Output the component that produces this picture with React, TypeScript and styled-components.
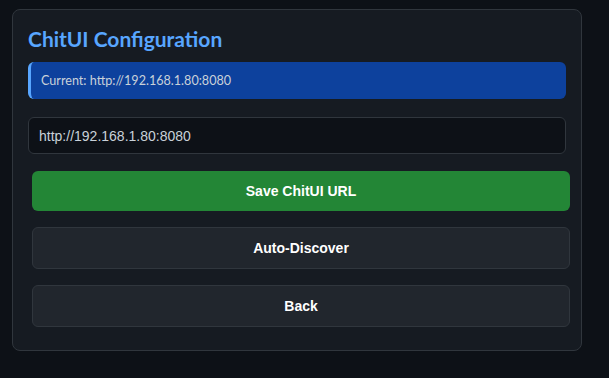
import React, { useState } from 'react'
import styled, { createGlobalStyle } from 'styled-components'

const GlobalStyle = createGlobalStyle`
  html, body {
    margin: 0;
    padding: 0;
    background: #0d1117;
    font-family: Lato, 'Noto Sans', sans-serif;
  }
`

const Page = styled.div`
  padding: 9px 27px 0 12px;
  width: 609px;
  height: 378px;
  box-sizing: border-box;
`

const Card = styled.div`
  background: #161b22;
  border: 1px solid #30363d;
  border-radius: 8px;
  padding: 16px 15px 16px 15px;
  display: flex;
  flex-direction: column;
  width: 570px;
  box-sizing: border-box;
`

const Title = styled.h2`
  margin: 0 0 10px 0;
  color: #58a6ff;
  font-size: 21px;
  line-height: 26px;
  font-weight: 700;
`

const Info = styled.div`
  background: #0d419d;
  border-left: 3px solid #58a6ff;
  border-radius: 6px;
  padding: 10px 10px;
  color: #c9d1d9;
  font-size: 12.6px;
  line-height: 17px;
  margin-bottom: 18px;
`

const UrlInput = styled.input`
  background: #0d1117;
  border: 1px solid #30363d;
  border-radius: 6px;
  color: #c9d1d9;
  font-family: 'Liberation Sans', Arial, sans-serif;
  font-size: 14px;
  padding: 10px 10px;
  height: 37px;
  box-sizing: border-box;
  outline: none;
  margin-bottom: 17px;
`

const Button = styled.button<{ $primary?: boolean }>`
  width: 100%;
  margin: 0 0 16px 4px;
  height: ${(p) => (p.$primary ? '40px' : '42px')};
  border: ${(p) => (p.$primary ? 'none' : '1px solid #30363d')};
  background: ${(p) => (p.$primary ? '#238636' : '#21262d')};
  color: #fff;
  border-radius: 6px;
  font-family: 'Liberation Sans', Arial, sans-serif;
  font-weight: 700;
  font-size: 14px;
  cursor: pointer;

  &:last-child {
    margin-bottom: 7px;
  }
`

export default function App() {
  const [url, setUrl] = useState('http://192.168.1.80:8080')
  return (
    <>
      <GlobalStyle />
      <Page>
        <Card>
          <Title>ChitUI Configuration</Title>
          <Info>Current: http://192.168.1.80:8080</Info>
          <UrlInput value={url} onChange={(e) => setUrl(e.target.value)} />
          <Button $primary>Save ChitUI URL</Button>
          <Button>Auto-Discover</Button>
          <Button>Back</Button>
        </Card>
      </Page>
    </>
  )
}
